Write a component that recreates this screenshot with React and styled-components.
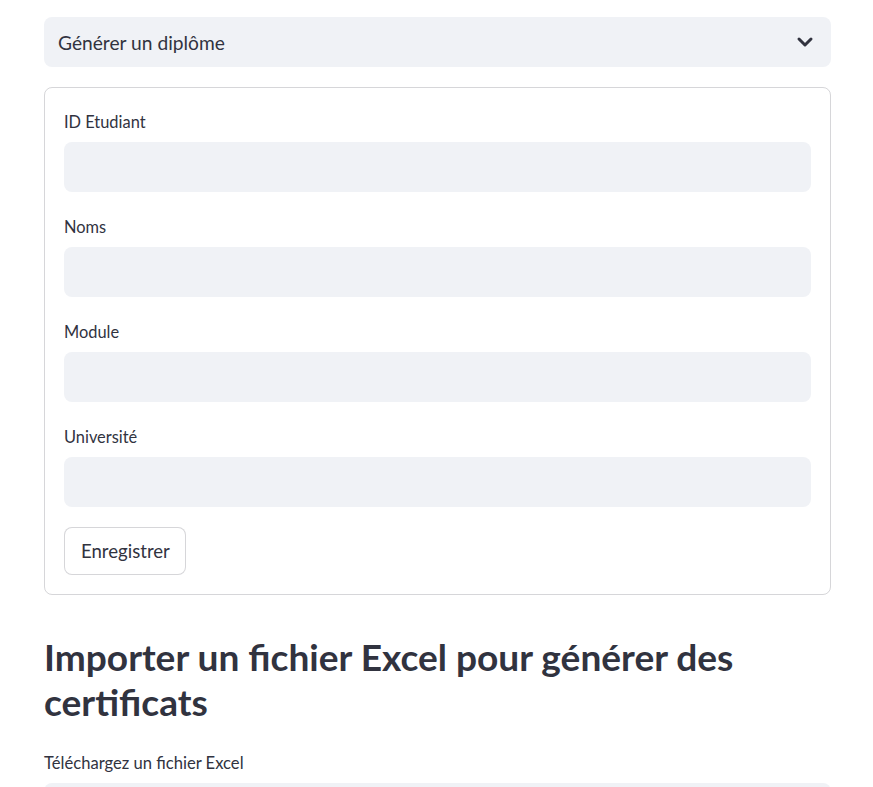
import React from 'react';
import styled, { createGlobalStyle } from 'styled-components';

const GlobalStyle = createGlobalStyle`
  body {
    margin: 0;
    background: #ffffff;
    font-family: 'Source Sans Pro', Lato, 'Noto Sans', sans-serif;
    color: #31333f;
  }
`;

const Page = styled.div`
  width: 787px;
  padding: 17px 42px 0 44px;
`;

const ExpanderHeader = styled.div`
  height: 50px;
  box-sizing: border-box;
  padding: 0 14px;
  display: flex;
  align-items: center;
  justify-content: space-between;
  background: #f0f2f6;
  border-radius: 8px;
  font-size: 19.2px;
`;

const FormBox = styled.form`
  margin-top: 20px;
  border: 1px solid rgba(49, 51, 63, 0.2);
  border-radius: 8px;
  padding: 20px 19px 19px;
  display: flex;
  flex-direction: column;
  gap: 21px;
`;

const Field = styled.div`
  display: flex;
  flex-direction: column;
`;

const Label = styled.label`
  font-size: 16.4px;
  line-height: 28px;
  margin-bottom: 6px;
`;

const Input = styled.input`
  height: 50px;
  box-sizing: border-box;
  border: none;
  border-radius: 8px;
  background: #f0f2f6;
  padding: 0 14px;
  font: inherit;
  outline: none;
`;

const Button = styled.button`
  align-self: flex-start;
  height: 48px;
  padding: 0 15px 0 16px;
  margin-top: -1px;
  border: 1px solid rgba(49, 51, 63, 0.2);
  border-radius: 8px;
  background: #ffffff;
  color: #31333f;
  font-family: inherit;
  font-size: 18.6px;
`;

const Heading = styled.h2`
  margin: 39px 0 0;
  font-size: 37.1px;
  line-height: 45px;
  font-weight: 700;
`;

const UploadLabel = styled.div`
  margin-top: 27px;
  font-size: 16.6px;
  line-height: 24px;
`;

const DropZone = styled.div`
  margin-top: 8px;
  height: 90px;
  border-radius: 8px;
  background: #f0f2f6;
`;

const fields = ['ID Etudiant', 'Noms', 'Module', 'Université'];

const App = () => (
  <Page>
    <GlobalStyle />
    <ExpanderHeader>
      <span>Générer un diplôme</span>
      <svg width="24" height="24" viewBox="0 0 24 24" fill="none" stroke="#31333f" strokeWidth="3" strokeLinecap="round" strokeLinejoin="round">
        <path d="M6 9l6 6 6-6" />
      </svg>
    </ExpanderHeader>
    <FormBox onSubmit={e => e.preventDefault()}>
      {fields.map(name => (
        <Field key={name}>
          <Label>{name}</Label>
          <Input type="text" />
        </Field>
      ))}
      <Button type="submit">Enregistrer</Button>
    </FormBox>
    <Heading>Importer un fichier Excel pour générer des certificats</Heading>
    <UploadLabel>Téléchargez un fichier Excel</UploadLabel>
    <DropZone />
  </Page>
);

export default App;
